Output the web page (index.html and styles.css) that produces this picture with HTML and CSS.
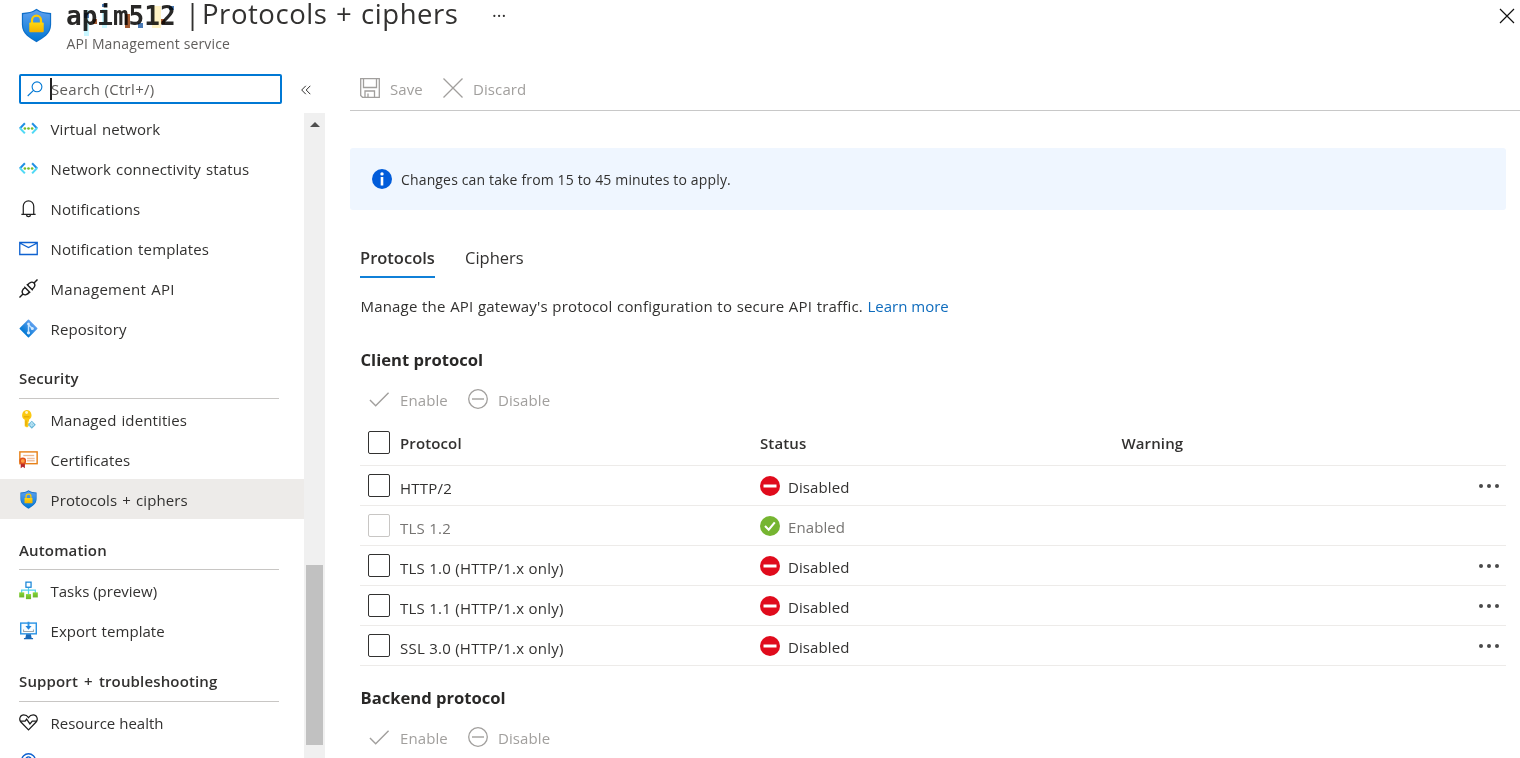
FILE: index.html
```html
<!DOCTYPE html>
<html lang="en">
<head>
<meta charset="utf-8">
<title>Protocols + ciphers</title>
<link rel="stylesheet" href="styles.css">
</head>
<body>
<svg class="defs" aria-hidden="true">
  <defs>
    <linearGradient id="blue" x1="0" y1="0" x2="0" y2="1"><stop offset="0" stop-color="#5ea0ef"/><stop offset="1" stop-color="#0078d4"/></linearGradient>
    <linearGradient id="gold" x1="0" y1="0" x2="0" y2="1"><stop offset="0" stop-color="#ffd70f"/><stop offset="1" stop-color="#f2b100"/></linearGradient>
    <linearGradient id="green" x1="0" y1="0" x2="0" y2="1"><stop offset="0" stop-color="#86d633"/><stop offset="1" stop-color="#6bb42d"/></linearGradient>
    <symbol id="shield" viewBox="0 0 18 20"><path d="M9 .3C11.5 2.2 14 2.5 17.500 2.700V9.500C17.500 15 12.500 17.500 9 19.700C5.500 17.500.5 15 .5 9.500V2.700C4 2.500 6.500 2.200 9 .3Z" fill="#0f6fc9"/><path d="M9 1.200C11.500 2.900 14 3.200 16.800 3.400V9.500C16.800 14.500 12.300 16.900 9 18.900C5.700 16.900 1.200 14.500 1.200 9.500V3.400C4 3.200 6.500 2.900 9 1.200Z" fill="url(#blue)"/><path d="M6.400 9V6.900a2.600 2.600 0 0 1 5.200 0V9" fill="none" stroke="#ffca00" stroke-width="1.300"/><rect x="4.800" y="8.300" width="8.400" height="5.600" rx=".6" fill="url(#gold)"/></symbol>
    <symbol id="vnet" viewBox="0 0 20 20"><path d="M6.200 4.500.9 10" stroke="#1f8fe5" stroke-width="2.100"/><path d="m.9 9.500 5.300 5.700" stroke="#50d9f5" stroke-width="2.100"/><path d="m13.800 4.500 5.300 5.500" stroke="#1f8fe5" stroke-width="2.100"/><path d="m19.100 9.500-5.300 5.700" stroke="#50d9f5" stroke-width="2.100"/><g fill="#76bc2d"><circle cx="6.200" cy="10" r="1.400"/><circle cx="10" cy="10" r="1.400"/><circle cx="13.800" cy="10" r="1.400"/></g></symbol>
    <symbol id="check" viewBox="0 0 22 20"><path d="m1 11 6 6L20.500 3.500" fill="none" stroke="currentColor" stroke-width="1.500"/></symbol>
    <symbol id="minus" viewBox="0 0 20 20"><circle cx="10" cy="10" r="9.300" fill="none" stroke="currentColor" stroke-width="1.300"/><path d="M4 10h12" stroke="currentColor" stroke-width="1.400"/></symbol>
    <symbol id="disabled" viewBox="0 0 20 20"><circle cx="10" cy="10" r="10" fill="#e00b1c"/><path d="M3.500 10h13" stroke="#fff" stroke-width="3"/></symbol>
    <symbol id="enabled" viewBox="0 0 20 20"><circle cx="10" cy="10" r="10" fill="#76b531"/><path d="m5 10 3.700 3.700 6.100-7.400" fill="none" stroke="#fff" stroke-width="2.100"/></symbol>
  </defs>
</svg>

<header class="header">
  <svg class="header-icon"><use href="#shield"/></svg>
  <div class="titles">
    <h1 class="title"><span class="resource">apim512<svg class="mosaic" viewBox="0 0 112 36" shape-rendering="crispEdges"><g fill="#c8f6ff"><path d="M18 9h5v26h-5zM36 8h5v19h-5z"/></g><g fill="#fff2c4"><path d="M86 5h9v22h-9z"/></g><g fill="#4a7ab5"><path d="M18 12h5v5h-5zM36 3h5v3h-5zM72 22h5v5h-5zM103 5h5v4h-5z"/></g><g fill="#a45b32"><path d="M59 13h5v14h-5zM27 18h4v5h-4zM95 18h4v5h-4z"/></g></svg></span><span class="bar">|</span><span class="blade">Protocols + ciphers</span><span class="more">···</span></h1>
    <p class="subtitle">API Management service</p>
  </div>
  <svg class="close" viewBox="0 0 16 16"><path d="m1 1 14 14M15 1 1 15" stroke="#111" stroke-width="1.200"/></svg>
</header>

<div class="body">
  <aside class="sidebar">
    <div class="search-row">
      <div class="search">
        <svg class="search-icon" viewBox="0 0 16 16" fill="none" stroke="#0078d4" stroke-width="1.100"><circle cx="10" cy="5.800" r="4.900"/><path d="M6.500 9.300.7 15"/></svg>
        <span class="caret"></span><span class="placeholder">Search (Ctrl+/)</span>
      </div>
      <svg class="collapse" viewBox="0 0 10 10" fill="none" stroke="#323130" stroke-width="1"><path d="M4.800.8.7 5l4.100 4.200M9.300.8 5.200 5l4.100 4.200"/></svg>
    </div>
    <div class="scroller">
      <nav class="menu">
        <a class="item"><svg class="icon"><use href="#vnet"/></svg><span>Virtual network</span></a>
        <a class="item"><svg class="icon"><use href="#vnet"/></svg><span>Network connectivity status</span></a>
        <a class="item"><svg class="icon" viewBox="0 0 20 20" fill="none" stroke="#222" stroke-width="1.300"><path d="M2.500 16.200h15M4.500 16V7.500a5.500 5.500 0 0 1 11 0V16M8 16.500a2 2 0 0 0 4 0"/></svg><span>Notifications</span></a>
        <a class="item"><svg class="icon" viewBox="0 0 20 20" fill="none" stroke="#0f62d0" stroke-width="1.400"><path d="M.8 3.700h18.400v12.600H.8zM.8 4.200 10 9l9.200-4.800"/></svg><span>Notification templates</span></a>
        <a class="item"><svg class="icon" viewBox="0 0 20 20" fill="none" stroke="#1b1b1b" stroke-width="1.500"><path d="m.5 19.500 3.700-3.700M15.800 4.200 19.500.5M5.500 8.200l6.300 6.300M8.200 5.500l6.300 6.300M6.300 9c-3 2.300-3.800 4.700-2.100 6.800 2.100 1.700 4.500.9 6.800-2.100M9 6.300c2.300-3 4.700-3.800 6.800-2.100 1.700 2.100.9 4.500-2.100 6.800"/></svg><span class="api">Management API</span></a>
        <a class="item"><svg class="icon" viewBox="0 0 20 20"><rect x="3.100" y="3.100" width="13.800" height="13.800" rx=".8" transform="rotate(45 10 10)" fill="url(#blue)"/><path d="M10 4v11M10 6l4 4" stroke="#c3e3ff" stroke-width="1.500"/><g fill="#d5ebff"><circle cx="10" cy="5.300" r="1.400"/><circle cx="10" cy="14.500" r="1.700"/><circle cx="14" cy="10" r="1.600"/></g></svg><span>Repository</span></a>
        <h2 class="group g-security"><span>Security</span></h2>
        <a class="item"><svg class="icon" viewBox="0 0 20 20"><path d="M8 0a5.500 5.500 0 0 1 2.500 10.200v1.600l-1 1 1 1.200-1.200 1.200 1.200 1.300L8.500 18.500 6 17V10.200A5.500 5.500 0 0 1 8 0Z" fill="#fbc913"/><circle cx="8" cy="2.600" r="1.500" fill="#fff5c8"/><path d="M5 7.200h6M7.400 11v5.500" stroke="#d99a00" stroke-width=".9"/><path d="m13.500 11.300 4.200 4.300-4.200 4.200-4.200-4.200z" fill="#65b6d8"/><path d="m13.500 13-2.200 3h4.400zM13.500 13v5" fill="none" stroke="#d6f2fc" stroke-width=".8"/></svg><span>Managed identities</span></a>
        <a class="item"><svg class="icon" viewBox="0 0 20 20"><rect x=".9" y="2" width="18.200" height="12.400" fill="#fff" stroke="#e78118" stroke-width="1.500"/><path d="M4.500 5.800h11.500" stroke="#edb78e" stroke-width="1.400"/><path d="M8.500 9h8M8.500 11.200h8" stroke="#efc1a4" stroke-width="1.600"/><path d="M1.800 12.500h4.400v6.800L4 17.700l-2.200 1.600z" fill="#b5262b"/><circle cx="4" cy="11.500" r="3.500" fill="#df4f1d"/><circle cx="4" cy="11.500" r="2" fill="#ff9c42"/></svg><span>Certificates</span></a>
        <a class="item active"><svg class="icon"><use href="#shield"/></svg><span>Protocols + ciphers</span></a>
        <h2 class="group g-automation"><span>Automation</span></h2>
        <a class="item"><svg class="icon" viewBox="0 0 20 20"><path d="M10 7v7M2.800 13V9.500h14.400V13" fill="none" stroke="#55d2ef" stroke-width="1.300"/><rect x="7.300" y="1.200" width="5.400" height="5.400" fill="#fff" stroke="#1684d8" stroke-width="1.300"/><g fill="url(#green)"><rect x=".2" y="12" width="5.300" height="5.300"/><rect x="7.300" y="13.800" width="5.400" height="5.300"/><rect x="14.500" y="12" width="5.300" height="5.300"/></g></svg><span class="tasks">Tasks (preview)</span></a>
        <a class="item"><svg class="icon" viewBox="0 0 20 20"><rect x="1.800" y="2.200" width="16.400" height="11.300" fill="#f8fdff" stroke="#2c94e5" stroke-width="1.500"/><path d="M7.500 14h5l.8 4h1.500v1.200H5.200V18h1.500z" fill="#1768b8"/><path d="M10 .8v6" stroke="#2f94e3" stroke-width="2"/><path d="M6.800 5.300h6.400L10 9.200z" fill="#2384db"/><path d="M4.800 9v2h10.400V9" fill="none" stroke="#9ba6ae" stroke-width="1.100"/></svg><span class="export">Export template</span></a>
        <h2 class="group g-support"><span>Support + troubleshooting</span></h2>
        <a class="item"><svg class="icon" viewBox="0 0 20 20" fill="none" stroke="#1b1b1b" stroke-width="1.300"><path d="M10 17.700 2 9.500C-.5 6.500 1.300 2 5 2c2.300 0 3.800 1 5 2.800C11.200 3 12.700 2 15 2c3.700 0 5.500 4.500 3 7.500z"/><path d="M1.500 8.500h5L8 6.500l3.500 5 2.500-3h4.500"/></svg><span class="tasks">Resource health</span></a>
        <a class="item"><svg class="icon" viewBox="0 0 20 20" fill="none" stroke="#0f62d0" stroke-width="1.500"><circle cx="10" cy="8" r="7.200"/><path d="M7.300 7a2.700 2.700 0 1 1 2.700 2.500"/></svg></a>
      </nav>
      <div class="scrollbar"><svg class="arrow" viewBox="0 0 10 5"><path d="m0 5 5-5 5 5z" fill="#505050"/></svg><div class="thumb"></div></div>
    </div>
  </aside>

  <main class="main">
    <div class="toolbar">
      <svg class="tool-icon" viewBox="0 0 20 20" fill="none" stroke="currentColor" stroke-width="1.300"><path d="M.7.700h18.600v18.600H2.500L.7 17.500zM3.500 1v8.500h13V1M5 19v-6h9.500v6M8 19v-3.500"/></svg><span class="save">Save</span>
      <svg class="tool-icon" viewBox="0 0 20 20"><path d="m.5.500 19 19M19.500.500l-19 19" stroke="currentColor" stroke-width="1.300"/></svg><span>Discard</span>
    </div>
    <div class="info">
      <svg class="info-icon" viewBox="0 0 20 20"><circle cx="10" cy="10" r="10" fill="#015cda"/><circle cx="10" cy="4.900" r="1.700" fill="#fff"/><path d="M10 8v8.500" stroke="#fff" stroke-width="2.600"/></svg>
      <span class="info-text">Changes can take from 15 to 45 minutes to apply.</span>
    </div>
    <div class="content">
      <div class="tabs"><span class="tab selected">Protocols</span><span class="tab">Ciphers</span></div>
      <p class="description"><span>Manage the API gateway's protocol configuration to secure API traffic.</span> <a class="link">Learn more</a></p>
      <h3 class="section">Client protocol</h3>
      <div class="commands"><svg class="check"><use href="#check"/></svg><span class="enable">Enable</span><svg class="minus"><use href="#minus"/></svg><span>Disable</span></div>
      <div class="table">
        <div class="row head"><i class="box"></i><span class="name">Protocol</span><span class="status">Status</span><span class="warning">Warning</span></div>
        <div class="row"><i class="box"></i><span class="name">HTTP/2</span><span class="status"><svg class="badge"><use href="#disabled"/></svg>Disabled</span><span class="dots"><i></i><i></i><i></i></span></div>
        <div class="row dim"><i class="box"></i><span class="name">TLS 1.2</span><span class="status"><svg class="badge"><use href="#enabled"/></svg>Enabled</span></div>
        <div class="row"><i class="box"></i><span class="name">TLS 1.0 (HTTP/1.x only)</span><span class="status"><svg class="badge"><use href="#disabled"/></svg>Disabled</span><span class="dots"><i></i><i></i><i></i></span></div>
        <div class="row"><i class="box"></i><span class="name">TLS 1.1 (HTTP/1.x only)</span><span class="status"><svg class="badge"><use href="#disabled"/></svg>Disabled</span><span class="dots"><i></i><i></i><i></i></span></div>
        <div class="row"><i class="box"></i><span class="name">SSL 3.0 (HTTP/1.x only)</span><span class="status"><svg class="badge"><use href="#disabled"/></svg>Disabled</span><span class="dots"><i></i><i></i><i></i></span></div>
      </div>
      <h3 class="section backend">Backend protocol</h3>
      <div class="commands"><svg class="check"><use href="#check"/></svg><span class="enable">Enable</span><svg class="minus"><use href="#minus"/></svg><span>Disable</span></div>
    </div>
  </main>
</div>
</body>
</html>
```

FILE: styles.css
```css
* { box-sizing: border-box; }
body { margin: 0; height: 758px; overflow: hidden; background: #fff; color: #323130; font: 15px/20px "Open Sans", "Noto Sans", sans-serif; white-space: nowrap; display: flex; flex-direction: column; }
h1, h2, h3, p { margin: 0; }
svg { flex: none; }
.defs { position: absolute; width: 0; height: 0; }

.header { height: 64px; flex: none; display: flex; padding-left: 21px; }
.header-icon { width: 31px; height: 35px; margin: 8px 14px 0 0; }
.title { height: 28px; display: flex; align-items: center; font-size: 27.500px; line-height: 28px; font-weight: 400; }
.resource { position: relative; width: 111px; margin-right: 8px; padding-top: 3px; font: bold 26px/28px "DejaVu Sans Mono", monospace; color: #292827; }
.mosaic { position: absolute; left: 0; top: 2px; width: 112px; height: 36px; mix-blend-mode: multiply; }
.bar { width: 17px; }
.blade { width: 257px; letter-spacing: .55px; word-spacing: 1px; }
.more { font-size: 18px; margin-left: 33px; padding-top: 2px; }
.subtitle { font-size: 14px; letter-spacing: .14px; color: #605e5c; line-height: 20px; margin: 6px 0 0 .5px; }
.close { width: 16px; height: 16px; margin: 8px 5px 0 auto; }

.body { flex: 1; min-height: 0; display: flex; }
.sidebar { width: 325px; flex: none; display: flex; flex-direction: column; }
.search-row { height: 49px; flex: none; padding: 10px 0 0 19px; display: flex; align-items: flex-start; }
.search { width: 263px; height: 30px; border: 2px solid #0078d4; border-radius: 2px; display: flex; align-items: center; color: #605e5c; padding-left: 6px; }
.search-icon { width: 16px; height: 16px; }
.caret { width: 2px; height: 22px; background: #222; margin-left: 7px; }
.placeholder { margin-left: -1px; letter-spacing: .3px; }
.collapse { width: 10px; height: 10px; margin: 11px 0 0 18.500px; }
.scroller { flex: 1; min-height: 0; display: flex; }
.menu { width: 304px; overflow: hidden; margin-top: -5px; }
.item { height: 40px; display: flex; align-items: center; padding-left: 19px; letter-spacing: .12px; word-spacing: 1px; }
.item span { padding-top: 1px; }
.item .api { letter-spacing: .28px; }
.item .tasks { letter-spacing: 0; word-spacing: 0; }
.item .export { letter-spacing: .05px; }
.icon { width: 19px; height: 19px; margin-right: 12.500px; }
.active { background: #edebe9; }
.group { width: 260px; margin-left: 19px; border-bottom: 1px solid #c8c6c4; font-size: 15px; line-height: 20px; font-weight: 600; padding-top: 21px; letter-spacing: .15px; word-spacing: 2px; }
.g-security { height: 51px; padding-top: 20px; }
.g-automation { height: 51px; }
.g-support { height: 52px; }
.scrollbar { width: 21px; background: #f0f0f0; display: flex; flex-direction: column; align-items: center; }
.arrow { width: 10px; height: 5px; margin-top: 9px; }
.thumb { width: 17px; height: 180px; margin-top: 438px; background: #c1c1c1; }

.main { flex: 1; margin-left: 25px; display: flex; flex-direction: column; }
.toolbar { height: 47px; border-bottom: 1px solid #c8c8c8; display: flex; align-items: center; color: #a19f9d; padding: 3px 0 0 10px; letter-spacing: .1px; }
.tool-icon { width: 20px; height: 20px; margin: -2px 10px 0 0; }
.save { width: 53px; }
.info { height: 62px; margin: 37px 14px 0 0; border-radius: 3px; background: #eff6ff; display: flex; align-items: center; padding-left: 22px; font-size: 14px; letter-spacing: .15px; }
.info-icon { width: 20px; height: 20px; margin-right: 9px; }
.info-text { padding-top: 1px; }
.content { padding: 31px 14px 0 10px; }
.tabs { height: 37px; display: flex; gap: 30px; font-size: 16.500px; line-height: 34px; }
.tab { height: 37px; }
.selected { font-weight: 600; border-bottom: 2px solid #1080d8; width: 75px; }
.description { margin: 17px 0 0 .5px; line-height: 22px; letter-spacing: .18px; word-spacing: .5px; }
.link { color: #0f6cbd; letter-spacing: 0; word-spacing: 0; }
.section { font-size: 16.600px; font-weight: 700; line-height: 24px; margin: 31px 0 0 .5px; color: #292827; }
.commands { display: flex; align-items: center; height: 22px; color: #a19f9d; padding-left: 9px; margin-top: 17px; letter-spacing: .1px; }
.check { width: 21px; height: 20px; margin: -2px 10px 0 0; }
.enable { width: 67.500px; }
.minus { width: 20px; height: 20px; margin: -2px 10.500px 0 0; }
.table { margin-top: 11px; }
.row { height: 40px; border-bottom: 1px solid #edebe9; display: flex; align-items: center; padding: 3px 7px 0 8px; }
.head { height: 44px; padding-top: 0; font-weight: 600; letter-spacing: .1px; }
.box { width: 22px; height: 23px; border: 1px solid #323130; border-radius: 2px; margin: -3px 10px 0 0; }
.head .box { margin-top: -2px; }
.name { width: 360px; padding-top: 1px; letter-spacing: .25px; }
.head .name, .head .status, .warning { margin-top: -2px; padding-top: 0; letter-spacing: .12px; }
.status { width: 361.500px; display: flex; align-items: center; letter-spacing: .1px; }
.badge { width: 20px; height: 20px; margin: -2px 8px 0 0; }
.dots { display: flex; gap: 4px; margin: -3px 0 0 auto; }
.dots i { width: 4px; height: 4px; border-radius: 50%; background: #4a4a4a; }
.dim { color: #767472; }
.dim .box { border-color: #c8c6c4; }
.backend { margin-top: 20px; }
```
